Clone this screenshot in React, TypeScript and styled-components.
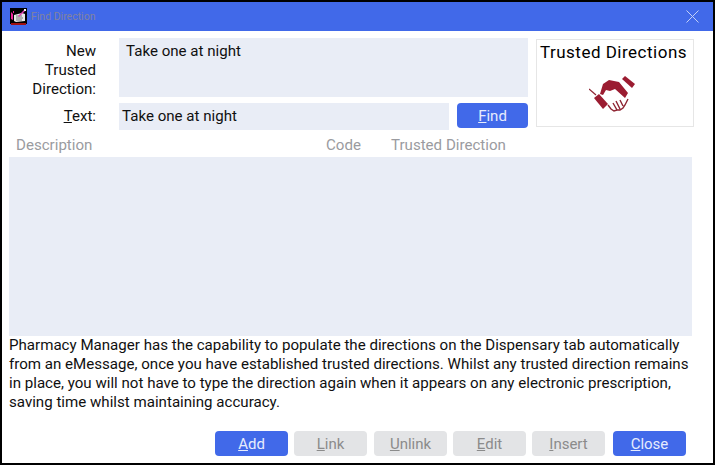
import styled, { createGlobalStyle } from 'styled-components';

const GlobalStyle = createGlobalStyle`
  html, body {
    margin: 0;
    padding: 0;
    background: #fff;
  }
  body {
    font-family: Roboto, "Liberation Sans", sans-serif;
  }
`;

function AppIcon() {
  return (
    <svg width="17" height="17" viewBox="0 0 17 17">
      <rect x="0" y="0" width="17" height="16" fill="#000" />
      <rect x="1" y="15" width="15" height="2" fill="#a01010" />
      <path d="M4 7l8-2 3 1v7l-9 1-2-1z" fill="#e8e8e8" />
      <path d="M6 8h6M6 10h7M6 12h6" stroke="#777" strokeWidth="1" />
      <path d="M1 4l2 2v6l-2-1zM3 3h1v2H3z" fill="#f0209a" />
      <path d="M8 8l6-6 1 1-6 6z" fill="#e040b0" />
      <rect x="14" y="1" width="2" height="2" fill="#fff" />
    </svg>
  );
}

function HandshakeIcon() {
  return (
    <HandshakeSvg width="46" height="38" viewBox="0 0 46 38">
      <path d="M0 13l7 6" stroke="#8e2331" strokeWidth="1.2" />
      <path d="M5 22l5-4 9 10-5 5z" fill="#9b1c31" />
      <path d="M11 18l3-10 6-4 10 2 9 11-3 5-10-9-5 2-4-1-3 5z" fill="#9b1c31" />
      <path d="M33 3l3-3 10 8-3 4z" fill="#9b1c31" />
      <path
        d="M19 29l3 4 3 2 3-1 3 0 3-2 2-3 3-6M24 27l4 7M27 25l4 8M31 24l3 6"
        fill="none"
        stroke="#8e2331"
        strokeWidth="1.4"
      />
    </HandshakeSvg>
  );
}

export default function App() {
  return (
    <Frame>
      <GlobalStyle />
      <TitleBar>
        <AppIcon />
        <Title>Find Direction</Title>
        <CloseIcon viewBox="0 0 13 13">
          <path d="M0.5 0.5l12 12M12.5 0.5l-12 12" />
        </CloseIcon>
      </TitleBar>
      <Body>
        <TopSection>
          <Fields>
            <MemoRow>
              <MemoLabel>
                New
                <br />
                Trusted
                <br />
                Direction:
              </MemoLabel>
              <MemoBox>Take one at night</MemoBox>
            </MemoRow>
            <TextRow>
              <FieldLabel>
                <u>T</u>ext:
              </FieldLabel>
              <TextBox>Take one at night</TextBox>
              <ActionButton $wide>
                <u>F</u>ind
              </ActionButton>
            </TextRow>
          </Fields>
          <LogoPanel>
            <LogoTitle>Trusted Directions</LogoTitle>
            <HandshakeIcon />
          </LogoPanel>
        </TopSection>
        <ColumnHeader>
          <DescriptionColumn>Description</DescriptionColumn>
          <CodeColumn>Code</CodeColumn>
          <span>Trusted Direction</span>
        </ColumnHeader>
        <ResultsList />
        <HelpText>
          Pharmacy Manager has the capability to populate the directions on the
          Dispensary tab automatically from an eMessage, once you have
          established trusted directions. Whilst any trusted direction remains
          in place, you will not have to type the direction again when it
          appears on any electronic prescription, saving time whilst maintaining
          accuracy.
        </HelpText>
        <ButtonBar>
          <ActionButton>
            <u>A</u>dd
          </ActionButton>
          <ActionButton disabled>
            <u>L</u>ink
          </ActionButton>
          <SpacedButton disabled>
            <u>U</u>nlink
          </SpacedButton>
          <ActionButton disabled>
            <u>E</u>dit
          </ActionButton>
          <ActionButton disabled>
            <u>I</u>nsert
          </ActionButton>
          <CloseButton>
            <u>C</u>lose
          </CloseButton>
        </ButtonBar>
      </Body>
    </Frame>
  );
}

const Frame = styled.div`
  width: 715px;
  height: 465px;
  box-sizing: border-box;
  border: 2px solid #000;
  display: flex;
  flex-direction: column;
  overflow: hidden;
  color: #101010;
  background: #fff;
`;

const TitleBar = styled.div`
  height: 29px;
  flex-shrink: 0;
  background: #4169e9;
  display: flex;
  align-items: center;
  padding: 0 14px 0 8px;
`;

const Title = styled.span`
  margin-left: 4px;
  font-size: 10.5px;
  color: #82829f;
  flex: 1;
`;

const CloseIcon = styled.svg`
  width: 13px;
  height: 13px;
  fill: none;
  stroke: #c4d0f6;
  stroke-width: 1;
`;

const Body = styled.div`
  flex: 1;
  padding: 7px 0 0 7px;
  display: flex;
  flex-direction: column;
`;

const TopSection = styled.div`
  display: flex;
  align-items: flex-start;
  gap: 8px;
`;

const Fields = styled.div`
  width: 519px;
  display: flex;
  flex-direction: column;
  gap: 6px;
`;

const MemoRow = styled.div`
  display: flex;
  height: 59px;
`;

const TextRow = styled.div`
  display: flex;
  align-items: flex-start;
`;

const FieldLabel = styled.div`
  width: 87px;
  margin-right: 23px;
  padding-top: 4px;
  text-align: right;
  font-size: 15.1px;
  line-height: 19px;
`;

const MemoLabel = styled(FieldLabel)`
  padding-top: 3.5px;
`;

const MemoBox = styled.div`
  width: 409px;
  height: 59px;
  box-sizing: border-box;
  padding: 4px 7px;
  background: #e9edf6;
  font-size: 15.1px;
  line-height: 19px;
`;

const TextBox = styled.div`
  width: 330px;
  height: 27px;
  margin-right: 8px;
  box-sizing: border-box;
  padding: 4px 3px;
  background: #e9edf6;
  font-size: 15.1px;
  line-height: 19px;
`;

const ActionButton = styled.button<{ $wide?: boolean }>`
  width: ${({ $wide }) => ($wide ? '71px' : '73px')};
  height: 25px;
  padding: 0;
  border: none;
  border-radius: 4px;
  background: #4169e9;
  color: #e6ecfd;
  font-family: inherit;
  font-size: 15px;

  &:disabled {
    background: #e3e4e6;
    color: #8b8b8b;
  }
`;

const SpacedButton = styled(ActionButton)`
  margin-left: 1px;
`;

const CloseButton = styled(ActionButton)`
  margin-left: 2px;
`;

const LogoPanel = styled.div`
  width: 158px;
  height: 88px;
  margin-top: 1px;
  box-sizing: border-box;
  border: 1px solid #e6e6e6;
  display: flex;
  flex-direction: column;
  align-items: center;
`;

const LogoTitle = styled.div`
  margin: 2px 3px 14px 0;
  font-size: 17px;
  line-height: 20px;
  letter-spacing: 0.5px;
  color: #000;
  white-space: nowrap;
`;

const HandshakeSvg = styled.svg`
  margin-right: 7px;
`;

const ColumnHeader = styled.div`
  display: flex;
  margin-top: 6px;
  padding-left: 7px;
  height: 19px;
  font-size: 15.1px;
  line-height: 19px;
  color: #9a9ba0;
`;

const DescriptionColumn = styled.span`
  width: 310px;
`;

const CodeColumn = styled.span`
  width: 65px;
`;

const ResultsList = styled.div`
  width: 683px;
  height: 179px;
  margin-top: 2px;
  background: #e9edf6;
`;

const HelpText = styled.p`
  width: 690px;
  margin: 0;
  font-size: 15.1px;
  line-height: 19px;
`;

const ButtonBar = styled.div`
  display: flex;
  gap: 6px;
  margin-top: 19px;
  margin-left: 206px;
`;
